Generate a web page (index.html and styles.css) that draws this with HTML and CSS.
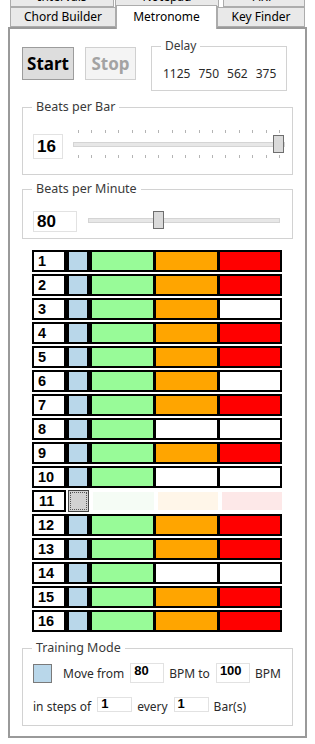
FILE: index.html
```
<!DOCTYPE html>
<html lang="en">
<head>
    <meta charset="UTF-8">
    <meta name="viewport" content="width=device-width, initial-scale=1.0">
    <title>Metronome</title>
    <link rel="stylesheet" href="styles.css">
</head>
<body>
    <div class="window">
        <div class="tab-row tab-row-back">
            <div class="tab tab-intervals">Intervals</div>
            <div class="tab tab-notepad">Notepad</div>
            <div class="tab tab-arp">ARP</div>
        </div>
        <div class="tab-row tab-row-front">
            <div class="tab tab-chord">Chord Builder</div>
            <div class="tab tab-metronome active">Metronome</div>
            <div class="tab tab-key">Key Finder</div>
        </div>

        <div class="panel">
            <div class="top-row">
                <button class="btn btn-start">Start</button>
                <button class="btn btn-stop" disabled>Stop</button>
                <fieldset class="group group-delay">
                    <legend>Delay</legend>
                    <div class="delays">
                        <span>1125</span><span>750</span><span>562</span><span>375</span>
                    </div>
                </fieldset>
            </div>

            <fieldset class="group group-bpb">
                <legend>Beats per Bar</legend>
                <div class="ctrl">
                    <div class="num-box num-bpb">16</div>
                    <div class="slider slider-bpb">
                        <div class="ticks"></div>
                        <input type="range" min="1" max="16" value="16">
                        <div class="ticks"></div>
                    </div>
                </div>
            </fieldset>

            <fieldset class="group group-bpm">
                <legend>Beats per Minute</legend>
                <div class="ctrl">
                    <div class="num-box num-bpm">80</div>
                    <div class="slider slider-bpm">
                        <input type="range" min="30" max="170" value="80">
                    </div>
                </div>
            </fieldset>

            <div class="beats" id="beats"></div>

            <fieldset class="group group-training">
                <legend>Training Mode</legend>
                <div class="train-line">
                    <span class="check"></span>
                    <span class="lbl lbl-move">Move from</span>
                    <span class="field field-big">80</span>
                    <span class="lbl">BPM to</span>
                    <span class="field field-big">100</span>
                    <span class="lbl">BPM</span>
                </div>
                <div class="train-line train-line-2">
                    <span class="lbl">in steps of</span>
                    <span class="field field-small">1</span>
                    <span class="lbl">every</span>
                    <span class="field field-small">1</span>
                    <span class="lbl">Bar(s)</span>
                </div>
            </fieldset>
        </div>
    </div>

    <script>
        // 3 = orange + red, 2 = orange only, 1 = green only, 0 = current beat (greyed)
        const pattern = [3, 3, 2, 3, 3, 2, 3, 1, 3, 1, 0, 3, 3, 1, 3, 3];
        const beats = document.getElementById('beats');

        pattern.forEach((level, i) => {
            const row = document.createElement('div');
            row.className = 'beat' + (level === 0 ? ' beat-muted' : '');
            row.innerHTML =
                `<div class="cell cell-num">${i + 1}</div>` +
                `<div class="cell cell-blue"></div>` +
                `<div class="cell cell-green"></div>` +
                `<div class="cell cell-orange${level >= 2 || level === 0 ? '' : ' off'}"></div>` +
                `<div class="cell cell-red${level === 3 || level === 0 ? '' : ' off'}"></div>`;
            beats.appendChild(row);
        });
    </script>
</body>
</html>
```

FILE: styles.css
```
* {
    box-sizing: border-box;
}

body {
    margin: 0;
    background: #ffffff;
    font-family: "Noto Sans", "Open Sans", sans-serif;
    color: #000000;
    overflow: hidden;
}

.window {
    width: 299px;
    margin-left: 8px;
}

/* tabs */

.tab-row {
    display: flex;
    align-items: flex-start;
    height: 20px;
    padding-left: 2px;
}

.tab-row-back {
    margin-top: -13px;
}

.tab {
    height: 20px;
    border: 1px solid #acacac;
    background: #e9e9e9;
    font-size: 12px;
    line-height: 18px;
    text-align: center;
    white-space: nowrap;
}

.tab-intervals { width: 104px; }
.tab-notepad { width: 104px; margin-left: 1px; }
.tab-arp { width: 82px; margin-left: 4px; }

.tab-chord { width: 106px; }
.tab-metronome { width: 101px; }
.tab-key { width: 88px; }

.tab.active {
    position: relative;
    z-index: 1;
    height: 24px;
    margin-top: -2px;
    margin-bottom: -2px;
    background: #ffffff;
    border-bottom: none;
    line-height: 22px;
}

/* main panel */

.panel {
    height: 711px;
    border: 2px solid #9a9a9a;
    padding: 0 12px;
    background: #ffffff;
}

.group {
    margin: 0;
    padding: 0;
    border: 1px solid #d2d2d2;
    min-width: 0;
}

.group legend {
    margin-left: 9px;
    padding: 0 4px;
    font-size: 12.5px;
    line-height: 14px;
    color: #3a3a3a;
}

.top-row {
    display: flex;
    align-items: flex-start;
    margin-top: 10px;
}

.btn {
    height: 33px;
    margin-top: 8px;
    padding: 0;
    font-family: inherit;
    font-size: 17px;
    font-weight: 700;
}

.btn-start {
    width: 52px;
    background: #dddddd;
    border: 1px solid #9c9c9c;
    color: #000000;
}

.btn-stop {
    width: 51px;
    margin-left: 11px;
    background: #f4f4f4;
    border: 1px solid #d0d0d0;
    color: #a3a3a3;
}

.group-delay {
    width: 136px;
    height: 52px;
    margin-left: 15px;
}

.group-delay legend {
    font-size: 12px;
}

.delays {
    display: flex;
    gap: 8px;
    padding: 12px 0 0 11px;
    font-size: 12px;
    color: #2a2a2a;
}

.group-bpb {
    margin-top: 9px;
}

.group-bpb .ctrl {
    height: 60px;
}

.group-bpm {
    margin-top: 7px;
}

.group-bpm .ctrl {
    height: 42px;
    padding-top: 6px;
}

.ctrl {
    display: flex;
    align-items: center;
    padding-left: 10px;
}

.num-box {
    border: 1px solid #e2e2e2;
    font-family: "Liberation Sans", Arial, sans-serif;
    font-weight: 700;
    font-size: 17px;
    padding-left: 3px;
}

.num-bpb {
    width: 30px;
    height: 25px;
    line-height: 23px;
    margin-top: 4px;
}

.num-bpm {
    width: 44px;
    height: 21px;
    line-height: 20px;
    margin-top: 2px;
}

.slider {
    display: flex;
    flex-direction: column;
}

.slider-bpb {
    width: 212px;
    margin-left: 10px;
    gap: 2px;
}

.slider-bpm {
    width: 192px;
    margin-left: 11px;
}

.ticks {
    height: 3px;
    margin: 0 5px;
    background: repeating-linear-gradient(to right, #b4b4b4 0 1px, transparent 1px 13.4px);
}

.slider input {
    -webkit-appearance: none;
    appearance: none;
    width: 100%;
    height: 18px;
    margin: 0;
    background: transparent;
}

.slider input::-webkit-slider-runnable-track {
    height: 5px;
    background: #e7e7e7;
    border: 1px solid #d4d4d4;
}

.slider input::-webkit-slider-thumb {
    -webkit-appearance: none;
    width: 11px;
    height: 18px;
    margin-top: -7.5px;
    background: #dadada;
    border: 1px solid #6e6e6e;
}

/* beat rows */

.beats {
    margin: 11px 0 0 10px;
    width: 250px;
}

.beat {
    display: flex;
    height: 22px;
    margin-bottom: 2px;
    padding: 2px;
    background: #000000;
}

.cell {
    height: 100%;
}

.cell-num {
    width: 30px;
    background: #ffffff;
    font-family: "Liberation Sans", Arial, sans-serif;
    font-weight: 700;
    font-size: 14.5px;
    line-height: 18px;
    padding-left: 4px;
}

.cell-blue {
    width: 18px;
    margin-left: 5px;
    background: #b9d7ea;
}

.cell-green {
    width: 61px;
    margin-left: 5px;
    background: #98fb98;
}

.cell-orange {
    width: 61px;
    margin-left: 3px;
    background: #ffa500;
}

.cell-red {
    width: 60px;
    margin-left: 3px;
    background: #ff0000;
}

.cell.off {
    background: #ffffff;
}

.beat-muted {
    background: #ffffff;
    padding: 2px 0;
}

.beat-muted .cell-num {
    width: 34px;
    height: 22px;
    margin-top: -2px;
    border: 2px solid #000000;
    padding-left: 5px;
}

.beat-muted .cell-blue {
    width: 21px;
    height: 22px;
    margin-top: -2px;
    margin-left: 2px;
    background: #d2d2d2;
    border: 1px solid #444444;
    outline: 1px dotted #555555;
    outline-offset: -3px;
}

.beat-muted .cell-green {
    margin-left: 4px;
    background: #f5fcf5;
}

.beat-muted .cell-orange {
    margin-left: 4px;
    background: #fff6e9;
}

.beat-muted .cell-red {
    margin-left: 4px;
    background: #fde8e8;
}

/* training mode */

.group-training {
    margin-top: 9px;
    height: 85px;
}

.train-line {
    display: flex;
    align-items: center;
    height: 20px;
    margin-top: 8px;
    padding-left: 10px;
    font-size: 12px;
    color: #2a2a2a;
}

.train-line-2 {
    margin-top: 13px;
    height: 16px;
}

.check {
    width: 19px;
    height: 19px;
    background: #b9d7ea;
    border: 1px solid #7a7a7a;
    margin-right: 11px;
}

.lbl {
    white-space: nowrap;
}

.field {
    border: 1px solid #e2e2e2;
    font-family: "Liberation Sans", Arial, sans-serif;
    font-weight: 700;
    font-size: 13px;
    color: #000000;
    padding-left: 3px;
    margin: 0 5px 0 6px;
}

.field-big {
    width: 34px;
    height: 20px;
    line-height: 14px;
}

.field-small {
    width: 35px;
    height: 15px;
    line-height: 12px;
}

.train-line-2 .lbl {
    margin-top: 4px;
}
```
